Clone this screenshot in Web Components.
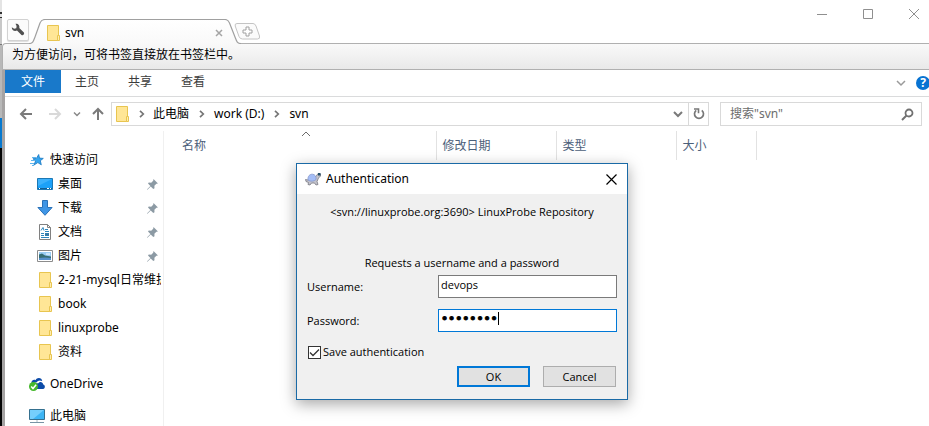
<!DOCTYPE html>
<html lang="zh-CN">
<head>
<meta charset="utf-8">
<meta name="viewport" content="width=device-width, initial-scale=1">
<title>svn</title>
<style>
    html, body {
        height: 100%;
        margin: 0;
        overflow: hidden;
    }

    body {
        display: flex;
        background: #fff;
        color: #000;
        font: 12px/16px "Noto Sans", "Noto Sans CJK SC", sans-serif;
    }
</style>
</head>
<body>
<desktop-edge></desktop-edge>
<explorer-window>
    <tab-strip slot="tabs" label="svn"></tab-strip>
    <bookmark-bar slot="tabs">为方便访问，可将书签直接放在书签栏中。</bookmark-bar>
    <ribbon-bar slot="tools"></ribbon-bar>
    <address-bar slot="tools" path="此电脑/work (D:)/svn"></address-bar>
    <nav-pane slot="side">
        <nav-item icon="star">快速访问</nav-item>
        <nav-item icon="desktop" child pinned>桌面</nav-item>
        <nav-item icon="download" child pinned>下载</nav-item>
        <nav-item icon="document" child pinned>文档</nav-item>
        <nav-item icon="picture" child pinned>图片</nav-item>
        <nav-item icon="folder" child>2-21-mysql日常维护</nav-item>
        <nav-item icon="folder" child>book</nav-item>
        <nav-item icon="folder" child>linuxprobe</nav-item>
        <nav-item icon="folder" child>资料</nav-item>
        <nav-item icon="onedrive" root>OneDrive</nav-item>
        <nav-item icon="computer" root>此电脑</nav-item>
    </nav-pane>
    <file-list></file-list>
</explorer-window>
<auth-dialog heading="Authentication">
    <span slot="realm">&lt;svn://linuxprobe.org:3690&gt; LinuxProbe Repository</span>
    <span slot="message">Requests a username and a password</span>
</auth-dialog>

<script>
const ICONS = {
    folder: `<svg width="16" height="16" viewBox="0 0 16 16"><path d="M2.5.5h11v15h-11z" fill="#ffe696" stroke="#e8c550"/><path d="M12.5 10.5h2v5h-2z" fill="#ffedb0" stroke="#e8c550"/></svg>`,
    star: `<svg width="16" height="16" viewBox="0 0 16 16"><path d="M9.700 2.500l.8 3.600 3.800.3-3 2.300 1 4.100-3.500-2.200-3.800 2.400 1.500-4-2.600-2.300 3.500-.3z" fill="#34a5ef" stroke="#1877c2" stroke-width=".8"/><path d="M3 5.500h4M2 8.500h3M1 11.500h4M3 13.500h2" stroke="#5db5ee"/></svg>`,
    desktop: `<svg width="16" height="16" viewBox="0 0 16 16"><path d="M.5 2.500h15v11H.5z" fill="#1ca1f8" stroke="#1c78b4"/><path d="M1 3h14L1 10z" fill="#3cb1fc"/><path d="M1 12.500h14" stroke="#125d92"/><path d="M2 12.500h1M10 12.500h2M13 12.500h1" stroke="#fff"/></svg>`,
    download: `<svg width="16" height="16" viewBox="0 0 16 16"><path d="M5.500.5h5v7h4.600L8 15.300.9 7.500h4.600z" fill="#3f96e6" stroke="#2b72b8"/></svg>`,
    document: `<svg width="16" height="16" viewBox="0 0 16 16"><path d="M2.500.5h8l3 3v12h-11z" fill="#fff" stroke="#808080"/><path d="M10.500.5v3h3" fill="none" stroke="#808080"/><path d="M4 6.500l2-3 1 3M8 5.500h3M8 7.500h4M4 9.500h3M4 11.500h3M4 13.500h8" fill="none" stroke="#2d85bd"/><path d="M8 9h4v3H8z" fill="#347ba9"/></svg>`,
    picture: `<svg width="16" height="16" viewBox="0 0 16 16"><path d="M.5 2.500h15v11H.5z" fill="#fff" stroke="#8c8c8c"/><path d="M2 4h12v8H2z" fill="#9acdf4"/><path d="M2 6.500l3-1 3 2 6 1V12H2z" fill="#366d72"/><path d="M2 10l6-.5 6 .5v2H2z" fill="#5690cb"/><path d="M9 6h4" stroke="#fff"/></svg>`,
    onedrive: `<svg width="16" height="16" viewBox="0 0 16 16"><path d="M2.500 7C2 4.500 5 3 6.500 4.200 8 1 13 1.600 13.200 5c-3-1.500-5.200.2-5.800 1.600C5.500 6 4 7 4 9z" fill="#0c4ba8"/><path d="M6 13V9.500C6.500 7.200 8.400 7 9 7.500c1.600-2.700 5-1.700 5.200 1 2.200.6 2.300 4-.2 4.500z" fill="#0c4ba8"/><circle cx="4.500" cy="10.500" r="4.500" fill="#46b82d"/><path d="M2.200 10.500l1.800 2 3.100-3.800" fill="none" stroke="#fff" stroke-width="1.500"/></svg>`,
    computer: `<svg width="16" height="16" viewBox="0 0 16 16"><path d="M.5 1.500h15v10H.5z" fill="#3db5f5" stroke="#35708f"/><path d="M1 2h14L4 11H1z" fill="#75cffc"/><path d="M7 12h2v2H7z" fill="#d4dde2"/><path d="M1 14.500h14" stroke="#7894a5"/></svg>`,
    pin: `<svg width="11" height="11" viewBox="0 0 11 11"><path d="M6.500 0L11 4.500l-1.600.3-2 2 .1 2.500-1.200.7-2.600-2.500L.7 10.600 0 10.900l.4-.8 3-3L1 4.600l.8-1 2.400.1 2-2z" fill="#8c9aa4"/></svg>`,
    chevron: `<svg width="6" height="8" viewBox="0 0 6 8"><path d="M1 .8L4.300 4 1 7.200" fill="none" stroke="#757575" stroke-width="1.700"/></svg>`,
    down: `<svg width="10" height="8" viewBox="0 0 10 8"><path d="M1 2l4 4 4-4" fill="none" stroke="currentColor" stroke-width="var(--stroke, 1.500)"/></svg>`,
    back: `<svg width="14" height="14" viewBox="0 0 14 14"><path d="M13 7H2M7 2L2 7l5 5" fill="none" stroke="currentColor" stroke-width="2"/></svg>`,
    forward: `<svg width="14" height="14" viewBox="0 0 14 14"><path d="M1 7h11M7 2l5 5-5 5" fill="none" stroke="currentColor" stroke-width="2"/></svg>`,
    up: `<svg width="14" height="14" viewBox="0 0 14 14"><path d="M7 13V2M2 7l5-5 5 5" fill="none" stroke="currentColor" stroke-width="2"/></svg>`,
    refresh: `<svg width="12" height="12" viewBox="0 0 12 12"><path d="M8.800 2.300A4.500 4.500 0 1 1 3.200 2.300" fill="none" stroke="#777" stroke-width="1.700"/><path d="M1 1h4.500v4.300" fill="none" stroke="#777" stroke-width="1.600"/></svg>`,
    search: `<svg width="13" height="13" viewBox="0 0 13 13"><circle cx="8" cy="5" r="3.500" fill="none" stroke="#717171" stroke-width="1.800"/><path d="M5.500 7.500L1 12" stroke="#717171" stroke-width="2"/></svg>`,
    wrench: `<svg width="14" height="14" viewBox="0 0 14 14"><path d="M4.500.8C7 .3 9 2.500 8.300 5l4.600 4.500c1 1.200-.9 3.600-2.400 2.500L6 7.600C3.300 8.700.6 7 .8 4.200l2.300 1.600 2.200-.6.300-2.200z" fill="#505050"/></svg>`,
    turtle: `<svg width="16" height="16" viewBox="0 0 16 16"><path d="M3 9l-2.500-.5.500 2 2.500 1L3 13.500l2 .5 1.500-2h3l1.500 2 2-.5-1-3 1.500-3.500 2-2V3L13 2.500l-2 3z" fill="#c3c3cc" stroke="#777781" stroke-width=".8"/><path d="M3 9C2.500 5 5 3 7.500 3.200c2.500.1 4 2.500 3.500 5.300-1.800 2-5.800 2.300-8 .5z" fill="#a4bdf6" stroke="#8798cc" stroke-width=".8"/><path d="M13 2h2.500v2.500H13z" fill="#244f69"/></svg>`
};

/* Screen behind the window, visible as a narrow strip */
class DesktopEdge extends HTMLElement {
    connectedCallback() {
        this.attachShadow({ mode: "open" });
        this.shadowRoot.innerHTML = /*HTML*/ `
<style>
    :host {
        flex: none;
        width: 2px;
        background: linear-gradient(#e4e4e4 0 12px, #333 12px 14px, #e0e0e0 14px 17px, #333 17px 18px, #c8c8c8 18px 44px, #777 44px 45px, #b8b8b8 45px 118px, #0879cf 118px 148px, #050505 148px);
    }
</style>`;
    }
}

/* Window frame with the slots for its bars and panes */
class ExplorerWindow extends HTMLElement {
    connectedCallback() {
        this.attachShadow({ mode: "open" });
        this.shadowRoot.innerHTML = /*HTML*/ `
<style>
    :host {
        display: flex;
        flex: 1;
        flex-direction: column;
        min-width: 0;
    }

    .frame {
        display: flex;
        flex: 1;
        flex-direction: column;
        min-height: 0;
        border-left: 3px solid #a5a3a3;
    }

    .panes {
        display: flex;
        flex: 1;
        min-height: 0;
    }
</style>
<slot name="tabs"></slot>
<div class="frame">
    <slot name="tools"></slot>
    <div class="panes">
        <slot name="side"></slot>
        <slot></slot>
    </div>
</div>`;
    }
}

class TabStrip extends HTMLElement {
    connectedCallback() {
        this.attachShadow({ mode: "open" });
        this.render();
    }

    render() {
        this.shadowRoot.innerHTML = /*HTML*/ `
<style>
    :host {
        display: flex;
        flex: none;
        align-items: flex-end;
        height: 43px;
        padding-left: 5px;
    }

    button {
        display: grid;
        place-items: center;
        padding: 0;
        border: 0;
        background: none;
    }

    .tools {
        width: 22px;
        height: 22px;
        margin-bottom: 2px;
        border: 1px solid #d2d2d2;
        border-radius: 2px;
        background: #fbfbfb;
        box-shadow: 0 1px 1px #ddd;
    }

    /* the tab covers the top line of the bar below it */
    .tab {
        display: grid;
        z-index: 1;
        margin-bottom: -1px;
    }

    .tab > * {
        grid-area: 1 / 1;
    }

    .content {
        display: flex;
        align-items: center;
        gap: 4px;
        padding: 3px 18px 0 16px;
    }

    .content span {
        flex: 1;
    }

    .new {
        margin: 0 0 3px -7px;
    }

    .controls {
        display: flex;
        align-self: flex-start;
        gap: 16px;
        margin-left: auto;
    }

    .controls button {
        width: 30px;
        height: 28px;
    }
</style>
<button class="tools" aria-label="工具">${ICONS.wrench}</button>
<div class="tab">
    <svg width="212" height="25" viewBox="0 0 212 25">
        <defs><linearGradient id="g" x2="0" y2="1"><stop stop-color="#fff"/><stop offset="1" stop-color="#f9f9f9"/></linearGradient></defs>
        <path d="M0 24.500C4 24.500 4.500 22 6 18L11 4Q12.500.5 16 .5H196Q199 .5 200.500 4L206 18C207.500 22 208 24.500 212 24.500V25H0z" fill="url(#g)"/>
        <path d="M0 24.500C4 24.500 4.500 22 6 18L11 4Q12.500.5 16 .5H196Q199 .5 200.500 4L206 18C207.500 22 208 24.500 212 24.500" fill="none" stroke="#a0a0a0" stroke-width="1.200"/>
    </svg>
    <div class="content">
        ${ICONS.folder}
        <span>${this.getAttribute("label")}</span>
        <button aria-label="关闭标签"><svg width="8" height="8" viewBox="0 0 8 8"><path d="M1 1l6 6M7 1L1 7" stroke="#a5a5a5" stroke-width="1.500"/></svg></button>
    </div>
</div>
<button class="new" aria-label="新标签"><svg width="27" height="17" viewBox="0 0 27 17"><path d="M3 .5H19Q21 .5 22 3l3.500 10q.8 3-2 3H8.500Q6 16 5 13.500L1.200 3Q.6.5 3 .5z" fill="#fbfbfb" stroke="#c4c4c4"/><path d="M12 4h3v3h3v3h-3v3h-3v-3H9V7h3z" fill="#fff" stroke="#a0a0a0"/></svg></button>
<div class="controls">
    <button aria-label="最小化"><svg width="10" height="10"><path d="M0 5.500h10" stroke="#8f8f8f"/></svg></button>
    <button aria-label="最大化"><svg width="10" height="10"><path d="M.5.5h9v9h-9z" fill="none" stroke="#8f8f8f"/></svg></button>
    <button aria-label="关闭"><svg width="10" height="10"><path d="M0 0l10 10M10 0L0 10" stroke="#8f8f8f"/></svg></button>
</div>`;
    }
}

class BookmarkBar extends HTMLElement {
    connectedCallback() {
        this.attachShadow({ mode: "open" });
        this.shadowRoot.innerHTML = /*HTML*/ `
<style>
    :host {
        display: block;
        flex: none;
        box-sizing: border-box;
        height: 27px;
        padding: 3px 9px;
        border: solid #b0b0b0;
        border-width: 1px 0 1px 1px;
        border-top-left-radius: 4px;
        background: linear-gradient(#f9f9f9, #e9e9e9);
    }
</style>
<slot></slot>`;
    }
}

class RibbonBar extends HTMLElement {
    connectedCallback() {
        this.attachShadow({ mode: "open" });
        this.shadowRoot.innerHTML = /*HTML*/ `
<style>
    :host {
        display: flex;
        flex: none;
        height: 26px;
        border-bottom: 1px solid #dadbdc;
    }

    button {
        height: 24px;
        padding: 0 15px 0 14px;
        border: 0;
        background: none;
        color: #3b3b3b;
        font: inherit;
    }

    .file {
        height: 23px;
        padding: 0 16px;
        background: #1979ca;
        color: #fff;
    }

    .right {
        display: flex;
        align-items: center;
        margin-left: auto;
        color: #9a9a9a;
    }

    .right button {
        display: grid;
        padding: 0 10px;
        place-items: center;
        color: inherit;
    }

    .right .help {
        width: 14px;
        height: 14px;
        margin-right: -1px;
        padding: 0;
        border-radius: 50%;
        background: #0873d2;
        color: #fff;
        font-weight: bold;
        line-height: 14px;
    }
</style>
<button class="file">文件</button>
<button>主页</button>
<button>共享</button>
<button>查看</button>
<div class="right">
    <button aria-label="展开功能区">${ICONS.down}</button>
    <button class="help">?</button>
</div>`;
    }
}

class AddressBar extends HTMLElement {
    connectedCallback() {
        this.attachShadow({ mode: "open" });
        this.render();
    }

    render() {
        const crumbs = this.getAttribute("path").split("/")
            .map(name => `<span class="sep">${ICONS.chevron}</span><a href="#">${name}</a>`)
            .join("");

        this.shadowRoot.innerHTML = /*HTML*/ `
<style>
    :host {
        display: flex;
        flex: none;
        padding: 5px 7px 5px 6px;
    }

    button {
        display: grid;
        place-items: center;
        width: 29px;
        padding: 0;
        border: 0;
        background: none;
        color: #7a7a7a;
    }

    button:disabled {
        color: #d9d9d9;
    }

    .recent {
        width: 16px;
    }

    .up {
        width: 26px;
    }

    .path, .search {
        display: flex;
        box-sizing: border-box;
        align-items: center;
        height: 24px;
        border: 1px solid #d9d9d9;
    }

    .path {
        flex: 1;
        min-width: 0;
        padding-left: 2px;
    }

    .path a {
        color: inherit;
        text-decoration: none;
        white-space: nowrap;
    }

    .sep {
        display: grid;
        place-items: center;
        width: 25px;
    }

    .sep:first-of-type {
        width: 23px;
    }

    .path button {
        width: 20px;
        height: 22px;
    }

    .drop {
        --stroke: 2;
        margin-left: auto;
    }

    .path .refresh {
        border-left: 1px solid #d9d9d9;
    }

    .search {
        width: 202px;
        margin-left: 11px;
        padding: 0 1px 0 9px;
    }

    input {
        flex: 1;
        min-width: 0;
        padding: 0;
        border: 0;
        outline: 0;
        background: none;
        font: inherit;
    }

    input::placeholder {
        color: #6d6d6d;
    }

    .search button {
        width: 26px;
    }
</style>
<button aria-label="后退">${ICONS.back}</button>
<button aria-label="前进" disabled>${ICONS.forward}</button>
<button class="recent" aria-label="最近位置"><svg width="8" height="8" viewBox="0 0 8 8"><path d="M1 2.500l3 3 3-3" fill="none" stroke="#888" stroke-width="1.500"/></svg></button>
<button class="up" aria-label="向上">${ICONS.up}</button>
<nav class="path">
    ${ICONS.folder}${crumbs}
    <button class="drop" aria-label="历史">${ICONS.down}</button>
    <button class="refresh" aria-label="刷新">${ICONS.refresh}</button>
</nav>
<div class="search">
    <input type="text" aria-label="搜索" placeholder="搜索&quot;svn&quot;">
    <button aria-label="开始搜索">${ICONS.search}</button>
</div>`;
    }
}

class NavPane extends HTMLElement {
    connectedCallback() {
        this.attachShadow({ mode: "open" });
        this.shadowRoot.innerHTML = /*HTML*/ `
<style>
    :host {
        display: block;
        flex: none;
        box-sizing: border-box;
        width: 159px;
        padding: 17px 2px 0 24px;
        overflow: hidden;
        border-right: 1px solid #f0f0f0;
    }
</style>
<slot></slot>`;
    }
}

class NavItem extends HTMLElement {
    connectedCallback() {
        this.attachShadow({ mode: "open" });
        this.render();
    }

    render() {
        const pin = this.hasAttribute("pinned") ? `<span class="pin">${ICONS.pin}</span>` : "";

        this.shadowRoot.innerHTML = /*HTML*/ `
<style>
    :host {
        display: block;
    }

    :host([child]) {
        padding-left: 8px;
    }

    :host([root]) {
        padding-top: 8px;
    }

    a {
        display: flex;
        align-items: center;
        gap: 5px;
        height: 24px;
        color: inherit;
        text-decoration: none;
    }

    svg {
        display: block;
        flex: none;
    }

    .name {
        flex: 1;
        overflow: hidden;
        white-space: nowrap;
    }

    .pin {
        padding-right: 3px;
    }
</style>
<a href="#">${ICONS[this.getAttribute("icon")]}<span class="name"><slot></slot></span>${pin}</a>`;
    }
}

class FileList extends HTMLElement {
    connectedCallback() {
        this.attachShadow({ mode: "open" });
        this.shadowRoot.innerHTML = /*HTML*/ `
<style>
    :host {
        display: block;
        flex: 1;
        min-width: 0;
        padding-left: 12px;
    }

    table {
        border-collapse: collapse;
        table-layout: fixed;
        width: 580px;
    }

    th {
        position: relative;
        box-sizing: border-box;
        height: 29px;
        padding: 0 6px;
        border-right: 1px solid #e2e2e2;
        color: #4c607a;
        font-weight: normal;
        text-align: left;
    }

    .sort {
        position: absolute;
        top: 0;
        left: 0;
        right: 0;
        margin: auto;
    }
</style>
<table>
    <colgroup><col style="width: 260px"><col style="width: 120px"><col style="width: 120px"><col style="width: 80px"></colgroup>
    <thead>
        <tr>
            <th>名称<svg class="sort" width="10" height="6"><path d="M1 5l4-4 4 4" fill="none" stroke="#6b6b6b"/></svg></th>
            <th>修改日期</th>
            <th>类型</th>
            <th>大小</th>
        </tr>
    </thead>
</table>`;
    }
}

class AuthDialog extends HTMLElement {
    connectedCallback() {
        this.attachShadow({ mode: "open" });
        this.render();
    }

    render() {
        this.shadowRoot.innerHTML = /*HTML*/ `
<style>
    :host {
        position: absolute;
        top: 163px;
        left: 296px;
        z-index: 2;
        box-sizing: border-box;
        width: 332px;
        border: 1px solid #1a6aa6;
        background: #f0f0f0;
        box-shadow: 0 4px 14px rgba(0, 0, 0, 0.35);
    }

    header {
        display: flex;
        align-items: center;
        gap: 5px;
        height: 30px;
        padding: 0 10px 0 8px;
        background: #fff;
    }

    h1 {
        flex: 1;
        margin: 0;
        font-size: 12px;
        font-weight: normal;
    }

    .close {
        display: grid;
        padding: 0;
        border: 0;
        background: none;
    }

    form {
        padding: 10px 10px 12px;
        font-family: "Open Sans", sans-serif;
        font-size: 11px;
    }

    p {
        margin: 0;
        text-align: center;
        white-space: nowrap;
    }

    .realm {
        padding-bottom: 35px;
    }

    .fields {
        display: grid;
        grid-template-columns: 131px 1fr;
        grid-auto-rows: 23px;
        align-items: center;
        row-gap: 11px;
        padding: 4px 0 12px;
    }

    .box {
        display: flex;
        box-sizing: border-box;
        height: 23px;
        padding: 1px 3px 4px 2px;
        border: 1px solid #7a7a7a;
        background: #fff;
    }

    .box.active {
        border-color: #0078d7;
    }

    .box input {
        flex: 1;
        min-width: 0;
        padding: 0;
        border: 0;
        outline: 0;
        background: none;
        font: inherit;
    }

    .box.active input {
        flex: none;
        field-sizing: content;
        font-family: "DejaVu Sans", sans-serif;
        font-size: 12px;
        -webkit-text-stroke: 1px #000;
    }

    .caret {
        width: 1px;
        height: 13px;
        margin-top: 1px;
        background: #000;
    }

    .save {
        display: flex;
        align-items: center;
        gap: 2px;
        width: max-content;
    }

    .save input {
        appearance: none;
        width: 13px;
        height: 13px;
        margin: 0 0 0 1px;
        border: 1px solid #333;
        background: #fff;
    }

    .save input:checked {
        background: #fff url("data:image/svg+xml,%3Csvg xmlns='http://www.w3.org/2000/svg' viewBox='0 0 11 11'%3E%3Cpath d='M1 5.500l3 3L10 2.500' fill='none' stroke='%23333' stroke-width='1.300'/%3E%3C/svg%3E");
    }

    .actions {
        display: flex;
        justify-content: flex-end;
        gap: 13px;
        padding: 6px 1px 0 0;
    }

    .actions button {
        width: 73px;
        height: 21px;
        padding: 0;
        border: 1px solid #adadad;
        background: #e1e1e1;
        font: inherit;
    }

    .actions .ok {
        border: 2px solid #0078d7;
    }
</style>
<header>
    ${ICONS.turtle}
    <h1>${this.getAttribute("heading")}</h1>
    <button class="close" aria-label="Close"><svg width="11" height="11"><path d="M.5.5l10 10M10.500.5l-10 10" stroke="#000" stroke-width="1.200"/></svg></button>
</header>
<form>
    <p class="realm"><slot name="realm"></slot></p>
    <p><slot name="message"></slot></p>
    <div class="fields">
        <label for="user">Username:</label>
        <div class="box"><input id="user" type="text" value="devops"></div>
        <label for="pass">Password:</label>
        <div class="box active"><input id="pass" type="password" value="password"><span class="caret"></span></div>
    </div>
    <label class="save"><input type="checkbox" checked>Save authentication</label>
    <div class="actions">
        <button class="ok" type="submit">OK</button>
        <button type="button">Cancel</button>
    </div>
</form>`;
        this.$form = this.shadowRoot.querySelector("form");
        this.$form.addEventListener("submit", e => e.preventDefault());
    }
}

customElements.define("desktop-edge", DesktopEdge);
customElements.define("explorer-window", ExplorerWindow);
customElements.define("tab-strip", TabStrip);
customElements.define("bookmark-bar", BookmarkBar);
customElements.define("ribbon-bar", RibbonBar);
customElements.define("address-bar", AddressBar);
customElements.define("nav-pane", NavPane);
customElements.define("nav-item", NavItem);
customElements.define("file-list", FileList);
customElements.define("auth-dialog", AuthDialog);
</script>
</body>
</html>
